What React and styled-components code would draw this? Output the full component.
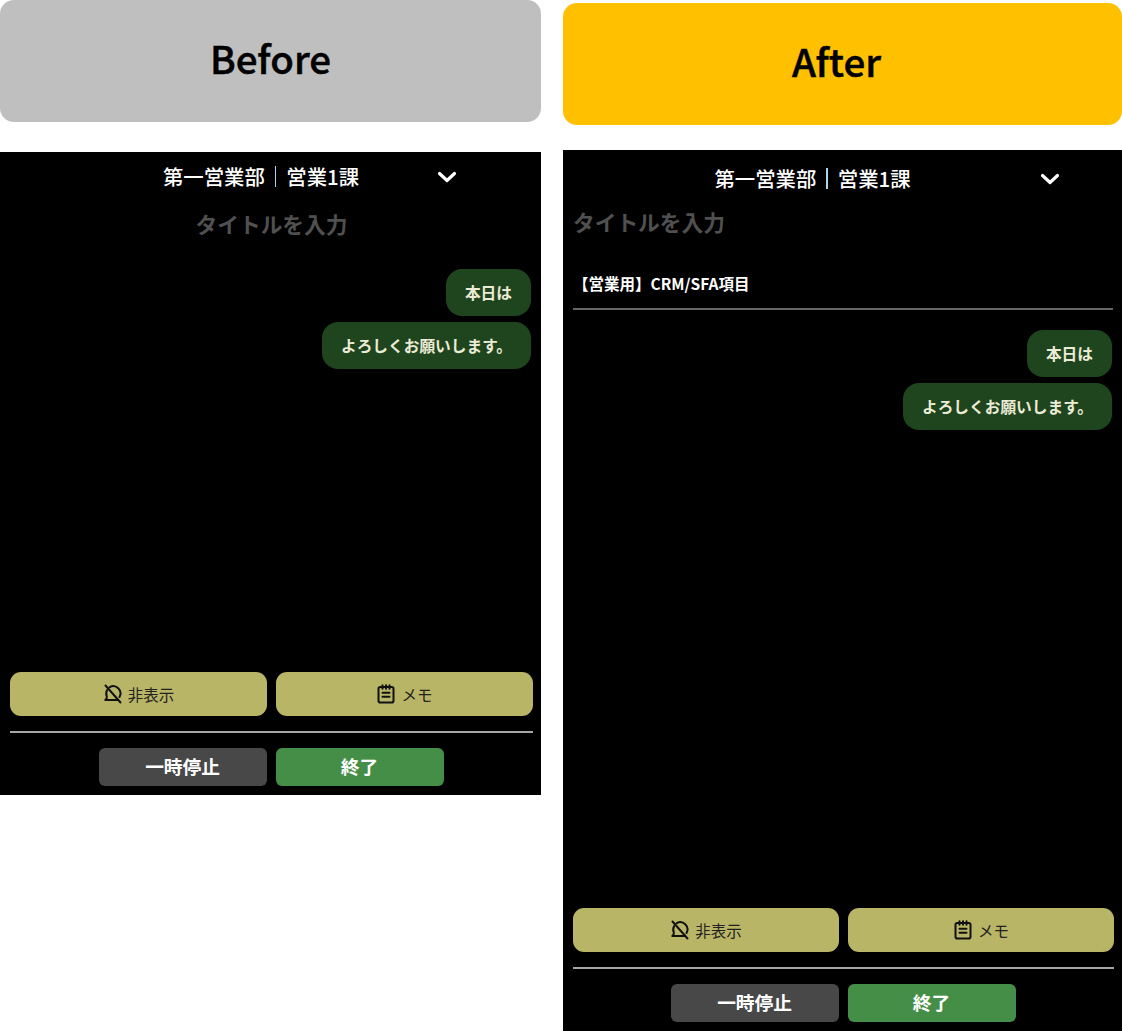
import React from "react";
import styled, { createGlobalStyle } from "styled-components";

const Global = createGlobalStyle`
  html, body { margin: 0; padding: 0; background: #fff; }
  body { font-family: "Noto Sans CJK JP", "Noto Sans", sans-serif; }
`;

const Page = styled.div`
  display: grid;
  grid-template-columns: 541px 559px;
  column-gap: 22px;
  width: 1122px;
  height: 1031px;
  overflow: hidden;
`;

const Column = styled.section`
  display: flex;
  flex-direction: column;
  padding-top: ${(p) => p.$top}px;
  gap: ${(p) => p.$gap}px;
`;

const Banner = styled.div`
  height: 122px;
  box-sizing: border-box;
  padding-bottom: 9px;
  padding-right: ${(p) => p.$shift}px;
  border-radius: 14px;
  background: ${(p) => p.$bg};
  display: flex;
  align-items: center;
  justify-content: center;
  font-size: 38.500px;
  font-weight: 500;
  -webkit-text-stroke: 0.5px #000;
  color: #000;
`;

const Phone = styled.div`
  height: ${(p) => p.$height}px;
  background: #000;
  display: flex;
  flex-direction: column;
  padding: 0 8px 9px 10px;
  box-sizing: border-box;
  color: #fff;
`;

const Header = styled.div`
  position: relative;
  height: 50px;
  box-sizing: border-box;
  display: flex;
  align-items: center;
  justify-content: center;
  padding-top: ${(p) => p.$top}px;
  padding-bottom: 2px;
  padding-right: ${(p) => p.$shift}px;
  font-size: 20.400px;
  font-weight: 500;
  line-height: 1;
`;

const Bar = styled.span`
  width: 1.500px;
  height: 21px;
  background: #a9d2ee;
  margin: 0 10px;
`;

const Chevron = styled.span`
  position: absolute;
  right: ${(p) => p.$right}px;
  top: ${(p) => p.$top}px;
  display: flex;
`;

const Title = styled.div`
  font-size: 21.700px;
  font-weight: 700;
  line-height: 44px;
  height: 44px;
  color: #505050;
  text-align: ${(p) => p.$align};
`;

const Agenda = styled.div`
  margin-top: 20px;
  margin-right: 1px;
  height: 46px;
  display: flex;
  align-items: center;
  padding-bottom: 6px;
  font-size: 15.500px;
  font-weight: 700;
  border-bottom: 2px solid #666;
  box-sizing: border-box;
`;

const Messages = styled.div`
  flex: 1;
  display: flex;
  flex-direction: column;
  align-items: flex-end;
  gap: 6px;
  padding-top: ${(p) => p.$pad}px;
  padding-right: 2px;
`;

const Bubble = styled.div`
  height: 47px;
  box-sizing: border-box;
  padding: 0 19px;
  display: flex;
  align-items: center;
  border-radius: 16px;
  background: #1f451f;
  color: #ecebd6;
  font-size: 15.700px;
  font-weight: 700;
`;

const ToolRow = styled.div`
  display: grid;
  grid-template-columns: 1fr 1fr;
  column-gap: 9px;
`;

const ToolButton = styled.button`
  height: 44px;
  border: 0;
  border-radius: 11px;
  background: #b9b566;
  color: #222;
  font-family: inherit;
  font-size: 15.500px;
  display: flex;
  align-items: center;
  justify-content: center;
  gap: 5px;
  padding: 0 0 1px;
`;

const Divider = styled.hr`
  margin: 15px 0;
  border: 0;
  height: 2px;
  background: #a6a6a6;
`;

const ActionRow = styled.div`
  display: grid;
  grid-template-columns: 1fr 1fr;
  column-gap: 9px;
`;

const ActionButton = styled.button`
  width: 168px;
  height: 38px;
  border: 0;
  border-radius: 6px;
  background: ${(p) => p.$bg};
  justify-self: ${(p) => p.$side};
  color: #fff;
  font-family: inherit;
  font-size: 18.700px;
  font-weight: 700;
  padding: 0 1px 3px 0;
`;

const HideIcon = () => (
  <svg width="20" height="20" viewBox="0 0 20 20" fill="none" stroke="#111" strokeWidth="2" strokeLinecap="round" strokeLinejoin="round">
    <path d="M2.500 1.500l15 17" />
    <path d="M6.500 3.300A7.200 7.200 0 0 1 16.500 13" />
    <path d="M4.200 6A7.200 7.200 0 0 0 3.800 12.500c.2.800-.2 2.300-1.500 3.500h11.200c.6 0 1-.1 1.400-.4" />
  </svg>
);

const MemoIcon = () => (
  <svg width="20" height="20" viewBox="0 0 20 20" fill="none" stroke="#111" strokeWidth="2" strokeLinecap="round" strokeLinejoin="round">
    <rect x="2.500" y="3" width="15" height="15.500" rx="1.800" />
    <path d="M6.500 1.200v3.500M10 1.200v3.500M13.500 1.200v3.500" />
    <path d="M6.500 8.800h7M6.500 12.800h7" />
  </svg>
);

const ChevronIcon = () => (
  <svg width="20" height="20" viewBox="0 0 20 20" fill="none" stroke="#fff" strokeWidth="3.200" strokeLinecap="round" strokeLinejoin="round">
    <path d="M2.500 6.500L10 13.500L17.500 6.500" />
  </svg>
);

const Screen = ({ height, titleAlign, agenda, pad, shift, headTop, chevRight, chevTop }) => (
  <Phone $height={height}>
    <Header $shift={shift} $top={headTop}>
      第一営業部<Bar />営業1課
      <Chevron $right={chevRight} $top={chevTop}><ChevronIcon /></Chevron>
    </Header>
    <Title $align={titleAlign}>タイトルを入力</Title>
    {agenda && <Agenda>【営業用】CRM/SFA項目</Agenda>}
    <Messages $pad={pad}>
      <Bubble>本日は</Bubble>
      <Bubble>よろしくお願いします。</Bubble>
    </Messages>
    <ToolRow>
      <ToolButton><HideIcon />非表示</ToolButton>
      <ToolButton><MemoIcon />メモ</ToolButton>
    </ToolRow>
    <Divider />
    <ActionRow>
      <ActionButton $bg="#484848" $side="end">一時停止</ActionButton>
      <ActionButton $bg="#458e47" $side="start">終了</ActionButton>
    </ActionRow>
  </Phone>
);

export default function App() {
  return (
    <>
      <Global />
      <Page>
        <Column $top={0} $gap={30}>
          <Banner $bg="#bfbfbf" $shift={0}>Before</Banner>
          <Screen height={643} titleAlign="center" pad={23} shift={21} headTop={0} chevRight={76} chevTop={15} />
        </Column>
        <Column $top={3} $gap={25}>
          <Banner $bg="#ffc000" $shift={12}>After</Banner>
          <Screen height={881} titleAlign="left" agenda pad={20} shift={62} headTop={8} chevRight={54} chevTop={19} />
        </Column>
      </Page>
    </>
  );
}
